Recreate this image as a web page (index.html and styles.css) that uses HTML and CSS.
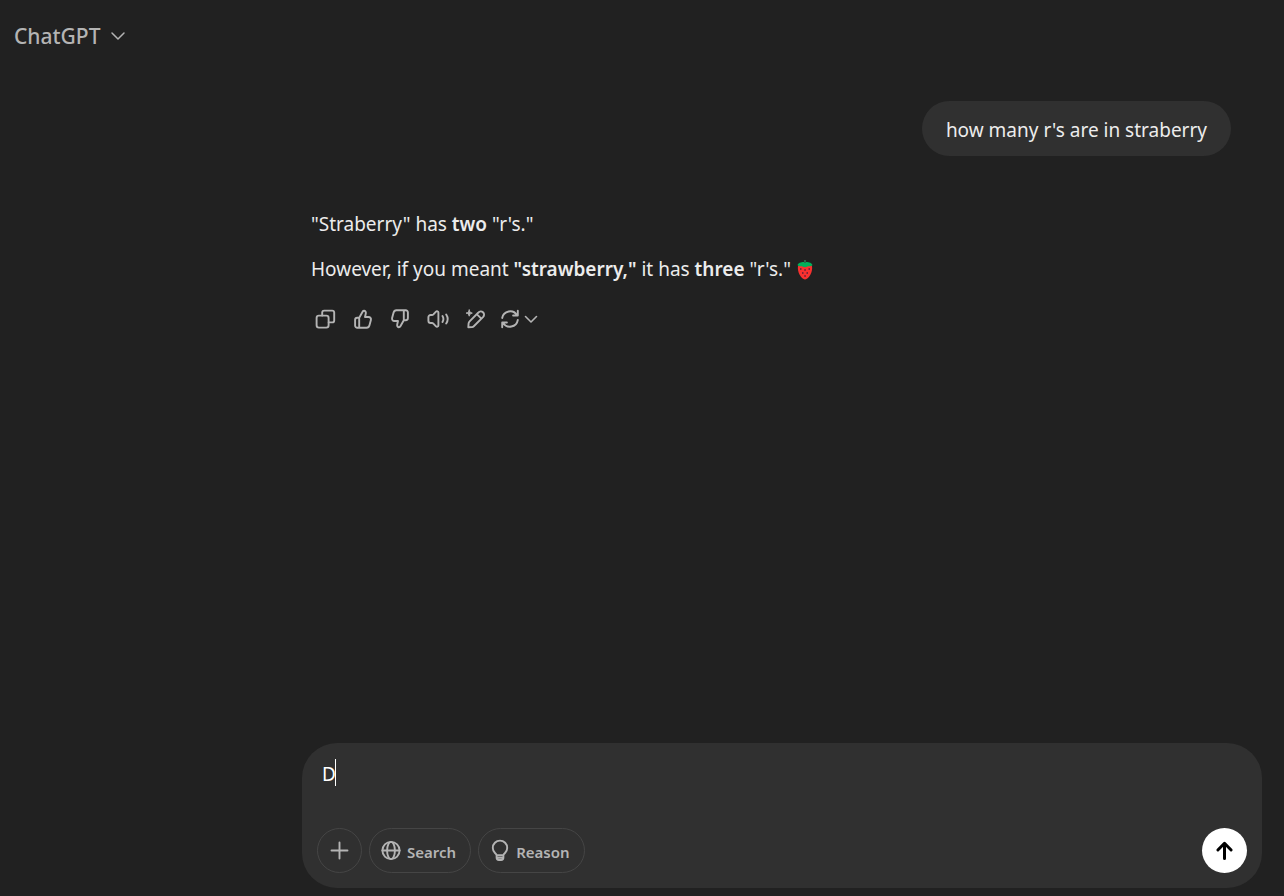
FILE: index.html
```html
<!DOCTYPE html>
<html lang="en">
<head>
<meta charset="utf-8">
<meta name="viewport" content="width=device-width, initial-scale=1">
<title>ChatGPT</title>
<link rel="stylesheet" href="styles.css">
</head>
<body>
<div class="app">
  <header class="topbar">
    <button class="model" type="button">ChatGPT
      <svg class="model-chevron" viewBox="0 0 16 16" aria-hidden="true"><path d="M2 5l6 6 6-6"/></svg>
    </button>
  </header>
  <main class="column">
    <section class="thread">
      <p class="bubble">how many r's are in straberry</p>
      <article class="answer">
        <p>"Straberry" has <strong>two</strong> "r's."</p>
        <p>However, if you meant <strong>"strawberry,"</strong> it has <strong>three</strong> "r's."
          <svg class="berry" viewBox="0 0 18 20" role="img" aria-label="strawberry">
            <path fill="#f8312f" d="M2 6C1 12 5 19 9 19.500C13 19 17 12 16 6C13 3 5 3 2 6Z"/>
            <path fill="#00b05a" d="M1.500 5C3 2 6 2 9 2S15 2 16.500 5C15 7 12.500 5.800 11.500 6.500C10 7.500 8 7.500 6.500 6.500C5 5.800 3 7 1.500 5Z"/>
            <path fill="#27674a" d="M8 0h2v3H8z"/>
            <path fill="#7d2238" d="M4 8h1.500v2H4zM8.300 9h1.500v2H8.300zM12.500 8H14v2h-1.500zM6 12h1.500v2H6zM10.500 12H12v2h-1.500zM8.300 15h1.500v2H8.300z"/>
          </svg>
        </p>
      </article>
      <div class="actions">
        <button type="button" aria-label="Copy"><svg class="icon" viewBox="0 0 24 24"><rect x="3.600" y="8.600" width="12" height="12" rx="2.300"/><path d="M9.200 8.500V5.600a2 2 0 0 1 2-2h8a2 2 0 0 1 2 2v7.800a2 2 0 0 1-2 2h-3.500"/></svg></button>
        <button type="button" aria-label="Good response"><svg class="icon" viewBox="0 0 24 24"><path d="M8.200 10.800H6.300a2.200 2.200 0 0 0-2.200 2.200v5.600a2.200 2.200 0 0 0 2.200 2.200h9.300a3 3 0 0 0 2.800-2.200l1.500-5.600a2.400 2.400 0 0 0-2.300-3H14l.8-3.500c.3-1.300-.3-2.500-1.500-2.700-.8-.1-1.300.2-1.700.9l-3.400 6.100zv10"/></svg></button>
        <button type="button" aria-label="Bad response"><svg class="icon flipped" viewBox="0 0 24 24"><path d="M8.200 10.800H6.300a2.200 2.200 0 0 0-2.200 2.200v5.600a2.200 2.200 0 0 0 2.200 2.200h9.300a3 3 0 0 0 2.800-2.200l1.500-5.600a2.400 2.400 0 0 0-2.300-3H14l.8-3.500c.3-1.300-.3-2.500-1.500-2.700-.8-.1-1.300.2-1.700.9l-3.400 6.100zv10"/></svg></button>
        <button type="button" aria-label="Read aloud"><svg class="icon" viewBox="0 0 24 24"><path d="M2.400 10.300a2.300 2.300 0 0 1 2.300-2.300h1.200c.6 0 1.100-.2 1.500-.6L10 4.600c.8-.8 2.400-.3 2.400.8v13.200c0 1.100-1.600 1.600-2.400.8l-2.600-2.800c-.4-.4-.9-.6-1.500-.6H4.700a2.300 2.300 0 0 1-2.300-2.300zM16.500 9c1.200 2 1.200 4 0 6M20.200 7.500c2 3 2 6 0 9"/></svg></button>
        <button type="button" aria-label="Edit in canvas"><svg class="icon" viewBox="0 0 24 24"><path d="M5.300 20.300l.3-3.900c.1-.8.5-1.500 1-2l8.800-8.900a3.200 3.200 0 0 1 4.800 4.400l-9.400 9.300c-.5.500-1.100.8-1.800.9zM14 7.400l4.300 4.200"/><path class="solid" d="M6.200 3c.4 2 1.100 2.700 3.100 3.100-2 .4-2.700 1.100-3.100 3.100-.4-2-1.100-2.700-3.100-3.100 2-.4 2.700-1.100 3.100-3.100Z"/></svg></button>
        <button class="retry" type="button" aria-label="Switch model"><svg class="icon" viewBox="0 0 24 24"><path d="M4.200 11A8 8 0 0 1 19 8.300M19.800 3.800v4.700h-4.700M19.800 13A8 8 0 0 1 5 15.700M4.200 20.200v-4.700h4.700"/></svg><svg class="small-chevron" viewBox="0 0 16 16"><path d="M2.500 5.500L8 11l5.500-5.500"/></svg></button>
      </div>
    </section>
    <form class="composer">
      <div class="entry">
        <textarea class="prompt" aria-label="Message" rows="1">D</textarea>
        <span class="caret"></span>
      </div>
      <div class="tools">
        <button class="tool round" type="button" aria-label="Add"><svg class="icon" viewBox="0 0 24 24"><path d="M11.500 3.500v16M3.500 11.500h16"/></svg></button>
        <button class="tool" type="button"><svg class="icon" viewBox="0 0 24 24"><circle cx="12" cy="11.500" r="8.600"/><ellipse cx="12" cy="11.500" rx="3.900" ry="8.600"/><path d="M3.400 11.500h17.200"/></svg><span>Search</span></button>
        <button class="tool" type="button"><svg class="icon" viewBox="0 0 24 24"><path d="M8.600 16.200c-.2-.9-.9-1.500-1.600-2.200a7.200 7.200 0 1 1 10 0c-.7.700-1.400 1.300-1.600 2.200zM8.600 16.200v2.300c0 1.400.9 2.500 2.300 2.500h2.200c1.400 0 2.300-1.100 2.300-2.500v-2.300M10 18.800h4"/></svg><span>Reason</span></button>
        <button class="send" type="submit" aria-label="Send"><svg viewBox="0 0 24 24"><path d="M11.500 19.500V4.500M4.900 11l6.600-6.700 6.600 6.700"/></svg></button>
      </div>
    </form>
  </main>
</div>
</body>
</html>
```
FILE: styles.css
```css
* { box-sizing: border-box; }
body {
  margin: 0;
  background: #212121;
  color: #ececec;
  font: 19px/28px "Noto Sans", "Open Sans", sans-serif;
}
p { margin: 0; }
button {
  margin: 0;
  padding: 0;
  border: 0;
  background: none;
  color: #b4b4b4;
  font: inherit;
  cursor: pointer;
}
svg {
  flex: none;
  fill: none;
  stroke: currentColor;
  stroke-width: 2;
  stroke-linecap: round;
  stroke-linejoin: round;
}
.app {
  display: flex;
  flex-direction: column;
  min-height: 100vh;
}
.topbar { padding: 20px 14px; }
.model {
  display: flex;
  align-items: center;
  gap: 10px;
  font-size: 21px;
  line-height: 32px;
  font-weight: 500;
}
.model-chevron { width: 16px; height: 16px; stroke-width: 1.5; }
.column {
  flex: 1;
  display: flex;
  flex-direction: column;
  width: 100%;
  max-width: 990px;
  margin-left: auto;
  padding: 0 22px 8px 8px;
}
.thread {
  flex: 1;
  display: flex;
  flex-direction: column;
  padding: 29px 31px 24px 9px;
}
.bubble {
  align-self: flex-end;
  padding: 15px 24px 12px;
  border-radius: 28px;
  background: #303030;
}
.answer {
  display: grid;
  gap: 17px;
  padding-top: 54px;
}
.answer strong { font-weight: 600; }
.berry {
  width: 18px;
  height: 20px;
  vertical-align: -4px;
  stroke: none;
}
.actions {
  display: flex;
  justify-content: space-between;
  width: 236px;
  margin: 18px 0 0 -4px;
}
.actions button {
  display: flex;
  align-items: center;
  justify-content: center;
  width: 36px;
  height: 36px;
}
.actions .retry { width: 48px; gap: 1px; }
.icon { width: 24px; height: 24px; stroke-width: 1.9; }
.flipped { transform: rotate(180deg); }
.solid { fill: currentColor; stroke-width: 1; }
.small-chevron { width: 16px; height: 16px; stroke-width: 1.6; }
.composer {
  padding: 15px;
  border-radius: 35px;
  background: #303030;
}
.entry { position: relative; padding: 2px 5px 0; }
.prompt {
  display: block;
  width: 100%;
  height: 68px;
  padding: 0;
  border: 0;
  outline: 0;
  resize: none;
  background: none;
  color: #fff;
  font: inherit;
}
.caret {
  position: absolute;
  top: 1px;
  left: 18px;
  width: 1px;
  height: 27px;
  background: #fff;
}
.tools { display: flex; gap: 7px; }
.tool {
  display: flex;
  align-items: center;
  gap: 4px;
  height: 45px;
  padding: 0 14px 0 9px;
  border: 1px solid #454545;
  border-radius: 23px;
  font-size: 15px;
  font-weight: 600;
}
.tool span { padding-top: 3px; }
.round {
  justify-content: center;
  width: 45px;
  padding: 0;
}
.send {
  display: grid;
  place-items: center;
  width: 45px;
  height: 45px;
  margin-left: auto;
  border-radius: 50%;
  background: #fff;
  color: #000;
}
.send svg { width: 24px; height: 24px; stroke-width: 3; }
```
